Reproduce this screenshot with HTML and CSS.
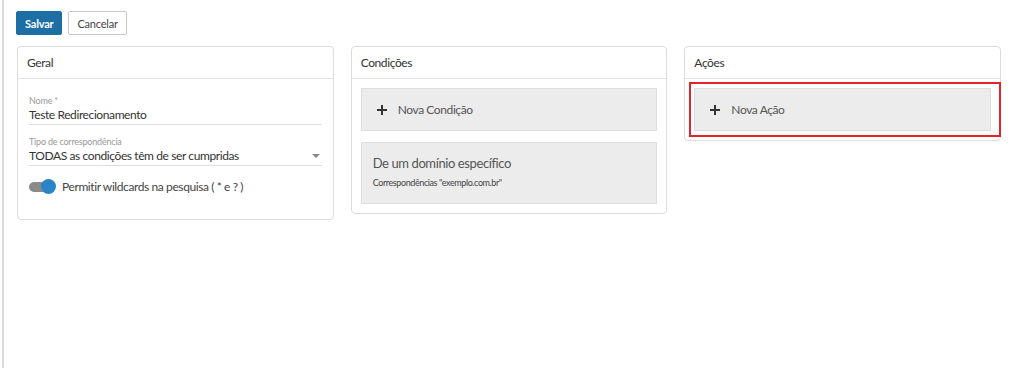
FILE: index.html
```html
<!DOCTYPE html>
<html lang="pt">
<head>
  <meta charset="UTF-8">
  <title>Redirecionamento</title>
  <link rel="stylesheet" href="styles.css">
</head>
<body>

  <div class="page">
    <div class="toolbar">
      <button class="btn btn-primary">Salvar</button>
      <button class="btn">Cancelar</button>
    </div>

    <div class="columns">
      <div class="panel">
        <div class="panel-head">Geral</div>
        <div class="panel-body form">
          <div class="field">
            <label>Nome *</label>
            <div class="value">Teste Redirecionamento</div>
          </div>
          <div class="field">
            <label>Tipo de correspondência</label>
            <div class="value select">TODAS as condições têm de ser cumpridas <span class="caret"></span></div>
          </div>
          <div class="toggle-row">
            <span class="toggle"><span class="knob"></span></span>
            <span>Permitir wildcards na pesquisa ( * e ? )</span>
          </div>
        </div>
      </div>

      <div class="panel">
        <div class="panel-head">Condições</div>
        <div class="panel-body list">
          <div class="card add">
            <svg class="plus" width="10" height="10" viewBox="0 0 10 10"><path d="M5 0v10M0 5h10" stroke="#333" stroke-width="2"/></svg>
            Nova Condição
          </div>
          <div class="card item">
            <div class="item-title">De um domínio específico</div>
            <div class="item-sub">Correspondências "exemplo.com.br"</div>
          </div>
        </div>
      </div>

      <div class="panel">
        <div class="panel-head">Ações</div>
        <div class="panel-body list">
          <div class="card add highlight">
            <svg class="plus" width="10" height="10" viewBox="0 0 10 10"><path d="M5 0v10M0 5h10" stroke="#333" stroke-width="2"/></svg>
            Nova Ação
          </div>
        </div>
      </div>
    </div>
  </div>

</body>
</html>
```

FILE: styles.css
```css
:root {
  --primary: #1c6ea4;
  --border: #dcdcdc;
  --card: #ececec;
}

body {
  margin: 0;
  font-family: Lato, 'Open Sans', sans-serif;
  letter-spacing: -0.4px;
  color: #333;
  background: white;
}

.page {
  margin-left: 2px;
  border-left: 2px solid #dadada;
  min-height: 368px;
  box-sizing: border-box;
  padding: 11px 23px 0 12px;
}

.toolbar {
  display: flex;
  gap: 6px;
}

.btn {
  font-family: inherit;
  font-size: 11px;
  letter-spacing: -0.2px;
  height: 24px;
  padding: 0 8px;
  background: white;
  color: #444;
  border: 1px solid #c8c8c8;
  border-radius: 2px;
}

.btn-primary {
  background: var(--primary);
  border-color: var(--primary);
  color: white;
  font-weight: bold;
}

.columns {
  margin: 11px 0 0 1px;
  display: grid;
  grid-template-columns: repeat(3, 1fr);
  gap: 17px;
  align-items: start;
}

.panel {
  border: 1px solid var(--border);
  border-radius: 4px;
  background: white;
}

.panel-head {
  height: 32px;
  box-sizing: border-box;
  line-height: 31px;
  padding: 0 9px;
  font-size: 12px;
  border-bottom: 1px solid #e2e2e2;
}

.form {
  padding: 16px 11px 25px 11px;
}

.field {
  margin-bottom: 11px;
  border-bottom: 1px solid #dedede;
}

.field label {
  display: block;
  font-size: 9px;
  line-height: 11px;
  letter-spacing: -0.2px;
  color: #999;
}

.field .value {
  font-size: 12px;
  line-height: 18px;
  color: #333;
}

.select {
  display: flex;
  justify-content: space-between;
  align-items: center;
}

.caret {
  margin-right: 2px;
  border-left: 4px solid transparent;
  border-right: 4px solid transparent;
  border-top: 4px solid #888;
}

.toggle-row {
  margin-top: 13px;
  display: flex;
  align-items: center;
  gap: 7px;
  font-size: 12px;
  color: #444;
}

.toggle {
  width: 26px;
  height: 10px;
  border-radius: 5px;
  background: #8a8a8a;
  position: relative;
}

.knob {
  position: absolute;
  right: -1px;
  top: -3px;
  width: 15px;
  height: 15px;
  border-radius: 50%;
  background: #2a85c8;
}

.list {
  padding: 9px;
  display: flex;
  flex-direction: column;
  gap: 11px;
}

.card {
  background: var(--card);
  border: 1px solid #dedede;
  color: #555;
}

.card.add {
  height: 43px;
  box-sizing: border-box;
  display: flex;
  align-items: center;
  gap: 11px;
  padding-left: 15px;
  font-size: 12px;
}

.card.item {
  padding: 10px 11px 14px;
}

.item-title {
  font-size: 13px;
  line-height: 20px;
}

.item-sub {
  margin-top: 4px;
  font-size: 9px;
  line-height: 12px;
  color: #444;
}

.highlight {
  position: relative;
}

.highlight::after {
  content: '';
  position: absolute;
  left: -6px;
  top: -7px;
  right: -11px;
  bottom: -7px;
  border: 2px solid #e3222c;
}
```
